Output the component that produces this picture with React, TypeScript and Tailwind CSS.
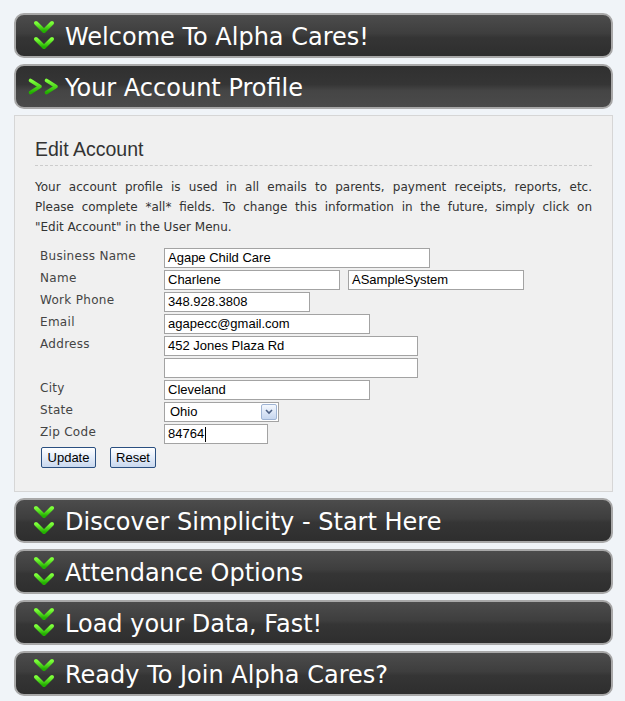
import React from "react";

const DownIcon = () => (
  <svg width="22" height="32" viewBox="0 0 22 32" className="shrink-0">
    <defs>
      <linearGradient id="gd" x1="0" y1="0" x2="0" y2="1">
        <stop offset="0" stopColor="#7dff3a" />
        <stop offset="1" stopColor="#22b000" />
      </linearGradient>
    </defs>
    <polyline points="3,3 11,11 19,3" fill="none" stroke="url(#gd)" strokeWidth="4" strokeLinecap="round" strokeLinejoin="round" />
    <polyline points="3,19 11,27 19,19" fill="none" stroke="url(#gd)" strokeWidth="4" strokeLinecap="round" strokeLinejoin="round" />
  </svg>
);

const RightIcon = () => (
  <svg width="32" height="17" viewBox="0 0 32 17" className="shrink-0">
    <defs>
      <linearGradient id="gr" x1="0" y1="0" x2="0" y2="1">
        <stop offset="0" stopColor="#7dff3a" />
        <stop offset="1" stopColor="#22b000" />
      </linearGradient>
    </defs>
    <polyline points="2.5,2.5 12,8.5 2.5,14.5" fill="none" stroke="url(#gr)" strokeWidth="3.6" strokeLinecap="round" strokeLinejoin="round" />
    <polyline points="18.5,2.5 28,8.5 18.5,14.5" fill="none" stroke="url(#gr)" strokeWidth="3.6" strokeLinecap="round" strokeLinejoin="round" />
  </svg>
);

const Bar = ({ title, active = false }: { title: string; active?: boolean }) => (
  <div
    className={
      "h-[45px] rounded-[10px] border-2 border-[#a8a8a8] flex items-center text-white text-[24px] font-['DejaVu_Sans',sans-serif] " +
      (active
        ? "bg-[linear-gradient(to_bottom,#303030_0%,#353535_45%,#454545_60%,#4a4a4a_100%)]"
        : "bg-[linear-gradient(to_bottom,#4c4c4c_0%,#3e3e3e_45%,#353535_55%,#2e2e2e_100%)]")
    }
  >
    {active ? (
      <div className="pl-[12px] flex items-center">
        <RightIcon />
        <span className="ml-[5px] leading-none pt-[3px]">{title}</span>
      </div>
    ) : (
      <div className="pl-[17px] flex items-center">
        <DownIcon />
        <span className="ml-[10px] leading-none pt-[3px]">{title}</span>
      </div>
    )}
  </div>
);

const Input = ({ w, value, caret = false }: { w: string; value: string; caret?: boolean }) => (
  <div
    className={
      "h-[20px] bg-white border border-[#a3a3a3] flex items-center pl-[3px] text-[13px] text-black font-['Liberation_Sans',Arial,sans-serif] " +
      w
    }
  >
    <span>{value}</span>
    {caret && <span className="inline-block w-[1px] h-[15px] bg-black ml-[1px]" />}
  </div>
);

const Row = ({ label, children }: { label: string; children?: React.ReactNode }) => (
  <div className="flex h-[22px]">
    <div className="w-[129px] pl-[5px] text-[12px] tracking-[0.3px] text-[#444] leading-[17px] font-['DejaVu_Sans',sans-serif]">
      {label}
    </div>
    <div className="flex gap-[8px]">{children}</div>
  </div>
);

const Btn = ({ label, w }: { label: string; w: string }) => (
  <button
    className={
      "h-[21px] rounded-[2px] border border-[#2a4f80] bg-[linear-gradient(to_bottom,#ffffff_0%,#e6eefa_45%,#c9d8ee_100%)] text-[13px] text-black font-['Liberation_Sans',Arial,sans-serif] leading-none " +
      w
    }
  >
    {label}
  </button>
);

export default function App() {
  return (
    <div className="min-h-[701px] bg-[#f0f4f8] pt-[13px] pb-[5px]">
      <div className="ml-[14px] w-[599px] flex flex-col gap-[6px]">
        <Bar title="Welcome To Alpha Cares!" />
        <Bar title="Your Account Profile" active />
        <div className="h-[377px] border border-[#d6d6d6] bg-[#f0f0f0] pt-[20px] px-[20px]">
          <div className="h-[30px] border-b border-dashed border-[#cccccc] text-[19.5px] text-[#333] leading-[26px] font-['Liberation_Sans',Arial,sans-serif]">
            Edit Account
          </div>
          <div className="mt-[11px] text-[12px] leading-[20px] text-[#333] font-['DejaVu_Sans',sans-serif]">
            <div className="whitespace-nowrap text-justify [text-align-last:justify]">
              Your account profile is used in all emails to parents, payment receipts, reports, etc.
            </div>
            <div className="whitespace-nowrap text-justify [text-align-last:justify]">
              Please complete *all* fields. To change this information in the future, simply click on
            </div>
            <div>"Edit Account" in the User Menu.</div>
          </div>
          <div className="mt-[11px] flex flex-col">
            <Row label="Business Name">
              <Input w="w-[266px]" value="Agape Child Care" />
            </Row>
            <Row label="Name">
              <Input w="w-[176px]" value="Charlene" />
              <Input w="w-[176px]" value="ASampleSystem" />
            </Row>
            <Row label="Work Phone">
              <Input w="w-[146px]" value="348.928.3808" />
            </Row>
            <Row label="Email">
              <Input w="w-[206px]" value="agapecc@gmail.com" />
            </Row>
            <Row label="Address">
              <Input w="w-[254px]" value="452 Jones Plaza Rd" />
            </Row>
            <Row label="">
              <Input w="w-[254px]" value="" />
            </Row>
            <Row label="City">
              <Input w="w-[206px]" value="Cleveland" />
            </Row>
            <Row label="State">
              <div className="w-[115px] h-[20px] bg-white border border-[#a3a3a3] flex items-center justify-between text-[13px] text-black font-['Liberation_Sans',Arial,sans-serif]">
                <span className="pl-[5px]">Ohio</span>
                <span className="w-[16px] h-[16px] mr-[1px] rounded-[2px] border border-[#9fb4d4] bg-[linear-gradient(to_bottom,#f4f8fe,#c6d6ef)] flex items-center justify-center">
                  <svg width="8" height="6" viewBox="0 0 8 6">
                    <polyline points="1,1 4,4 7,1" fill="none" stroke="#4d6185" strokeWidth="1.6" />
                  </svg>
                </span>
              </div>
            </Row>
            <Row label="Zip Code">
              <Input w="w-[104px]" value="84764" caret />
            </Row>
            <div className="flex gap-[14px] pl-[6px] mt-[1px]">
              <Btn label="Update" w="w-[55px]" />
              <Btn label="Reset" w="w-[46px]" />
            </div>
          </div>
        </div>
        <Bar title="Discover Simplicity - Start Here" />
        <Bar title="Attendance Options" />
        <Bar title="Load your Data, Fast!" />
        <Bar title="Ready To Join Alpha Cares?" />
      </div>
    </div>
  );
}
